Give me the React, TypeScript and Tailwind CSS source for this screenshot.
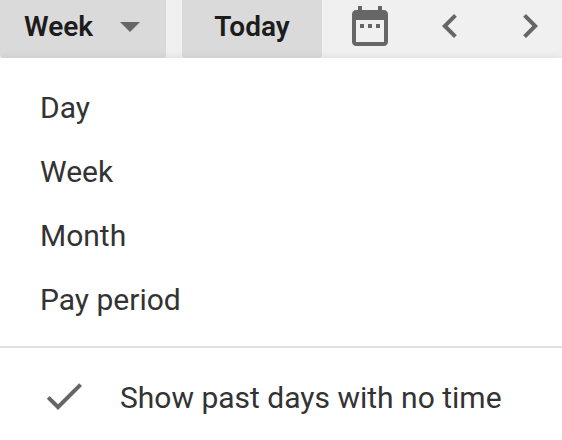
import { useState } from "react";
import type { ReactNode } from "react";

function Icon({ children, className = "" }: { children: ReactNode; className?: string }) {
  return (
    <svg viewBox="0 0 24 24" aria-hidden="true" className={`size-12 shrink-0 fill-[#666666] ${className}`}>
      {children}
    </svg>
  );
}

function Toolbar({ view }: { view: string }) {
  return (
    <header className="flex items-start bg-[#f0f0f0] text-[28px] leading-[50px] font-semibold text-[#1c1c1c]">
      <button
        type="button"
        aria-haspopup="menu"
        aria-expanded="true"
        className="mr-4 flex w-[166px] items-start justify-between rounded-b bg-[#dadada] pt-0.5 pr-3 pb-1.5 pl-6"
      >
        {view}
        <Icon>
          <path d="M7 10l5 5 5-5z" />
        </Icon>
      </button>
      <button type="button" className="w-[140px] rounded-b bg-[#dadada] pt-0.5 pb-1.5 text-center">
        Today
      </button>
      <div className="flex gap-8 pt-0.5 pl-6">
        <button type="button" aria-label="Pick a date">
          <Icon>
            <path d="M9 11H7v2h2v-2zm4 0h-2v2h2v-2zm4 0h-2v2h2v-2zm2-7h-1V2h-2v2H8V2H6v2H5c-1.11 0-1.99.9-1.99 2L3 20c0 1.1.89 2 2 2h14c1.1 0 2-.9 2-2V6c0-1.1-.9-2-2-2zm0 16H5V9h14v11z" />
          </Icon>
        </button>
        <button type="button" aria-label="Previous">
          <Icon>
            <path d="M15.41 7.41L14 6l-6 6 6 6 1.41-1.41L10.83 12z" />
          </Icon>
        </button>
        <button type="button" aria-label="Next">
          <Icon>
            <path d="M10 6L8.59 7.41 13.17 12l-4.58 4.59L10 18l6-6z" />
          </Icon>
        </button>
      </div>
    </header>
  );
}

const views = ["Day", "Week", "Month", "Pay period"];

export default function App() {
  const [view, setView] = useState("Week");
  const [showPast, setShowPast] = useState(true);

  return (
    <div className="min-h-screen overflow-hidden bg-white font-['Roboto',sans-serif]">
      <Toolbar view={view} />
      <div className="relative min-h-96 bg-white text-[30px] leading-[64px] text-[#333333] shadow-[0_0_8px_rgba(0,0,0,0.1)]">
        <ul className="border-b-2 border-[#e0e0e0] pt-[18px] pb-3.5">
          {views.map((name) => (
            <li key={name}>
              <button type="button" onClick={() => setView(name)} className="block w-full px-10 text-left">
                {name}
              </button>
            </li>
          ))}
        </ul>
        <label className="flex items-start gap-8 px-10 pt-4 leading-[68px] whitespace-nowrap">
          <input
            type="checkbox"
            checked={showPast}
            onChange={(event) => setShowPast(event.target.checked)}
            className="peer sr-only"
          />
          <Icon className="invisible my-2 peer-checked:visible">
            <path d="M9 16.17L4.83 12l-1.42 1.41L9 19 21 7l-1.41-1.41z" />
          </Icon>
          Show past days with no time
        </label>
      </div>
    </div>
  );
}
